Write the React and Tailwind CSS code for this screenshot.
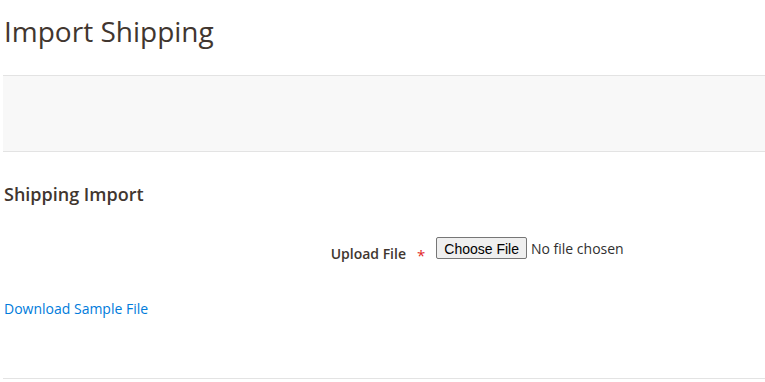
export default function App() {
  return (
    <div className="w-[765px] h-[382px] bg-white font-['Open_Sans',sans-serif] text-[#41362f] overflow-hidden">
      <div className="pl-[4px] pt-[13px] h-[75px]">
        <h1 className="text-[28px] leading-[36px] font-normal">Import Shipping</h1>
      </div>
      <div className="ml-[3px] h-[77px] bg-[#f8f8f8] border-y border-[#e3e3e3]" />
      <div className="pl-[4px] pt-[29px]">
        <h2 className="text-[18px] leading-[26px] font-semibold">Shipping Import</h2>
        <div className="flex items-start mt-[30px]">
          <div className="w-[402px] pt-[7px] text-right text-[14px] font-semibold leading-[20px]">Upload File</div>
          <span className="ml-[11px] pt-[11px] text-[#e22626] text-[15px] leading-[14px]">*</span>
          <input type="file" className="ml-[11px] text-[14px] leading-[22px] text-[#303030] file:mr-[4px] file:h-[22px] file:px-[7px] file:border file:border-[#767676] file:rounded-[2px] file:bg-[#efefef] file:text-black file:font-['Liberation_Sans',sans-serif] file:text-[14px]" />
        </div>
        <a href="#" className="block mt-[35px] text-[14px] leading-[20px] text-[#007bdb]">Download Sample File</a>
      </div>
      <div className="mt-[59px] ml-[3px] border-t border-[#e3e3e3]" />
    </div>
  );
}
